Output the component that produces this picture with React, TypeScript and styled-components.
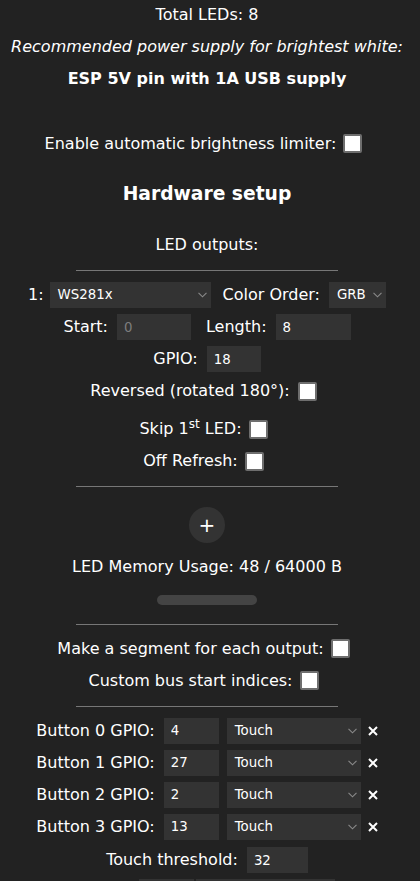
import React from 'react';
import styled, { createGlobalStyle } from 'styled-components';

const Global = createGlobalStyle`
  html, body { margin: 0; padding: 0; background: #222; }
  body {
    font-family: "DejaVu Sans", Verdana, sans-serif;
    color: #fff;
    overflow: hidden;
  }
  #root { height: 881px; overflow: hidden; }
`;

const Page = styled.div`
  width: 414px;
  display: flex;
  flex-direction: column;
  align-items: center;
  font-size: 16px;
`;

const Line = styled.div<{ $mt?: number; $italic?: boolean; $bold?: boolean; $pl?: number }>`
  height: 32px;
  line-height: 32px;
  display: flex;
  align-items: center;
  justify-content: center;
  white-space: nowrap;
  margin-top: ${(p) => p.$mt ?? 0}px;
  padding-left: ${(p) => p.$pl ?? 0}px;
  font-style: ${(p) => (p.$italic ? 'italic' : 'normal')};
  font-weight: ${(p) => (p.$bold ? 'bold' : 'normal')};
`;

const Heading = styled.h3<{ $mt: number }>`
  margin: ${(p) => p.$mt}px 0 0;
  height: 38px;
  line-height: 38px;
  font-size: 18.72px;
  font-weight: bold;
`;

const Rule = styled.div<{ $mt: number }>`
  width: 262px;
  height: 0;
  border-top: 1px solid #777;
  margin-top: ${(p) => p.$mt}px;
`;

const Label = styled.span<{ $ml?: number }>`
  margin-left: ${(p) => p.$ml ?? 0}px;
`;

const Sup = styled.sup`
  font-size: 12px;
  line-height: 0;
  vertical-align: 6px;
`;

const Check = styled.span<{ $ml: number }>`
  display: inline-block;
  box-sizing: border-box;
  width: 19px;
  height: 19px;
  margin-left: ${(p) => p.$ml}px;
  margin-right: 7px;
  background: #fff;
  border: 2px solid #6e6e6e;
  border-radius: 2px;
`;

const Field = styled.input<{ $w: number; $ml: number; $dim?: boolean }>`
  box-sizing: border-box;
  width: ${(p) => p.$w}px;
  height: 26px;
  margin: 0 0 0 ${(p) => p.$ml}px;
  padding: 0 0 0 7px;
  border: none;
  outline: none;
  background: #333;
  color: ${(p) => (p.$dim ? '#7d7d7d' : '#fff')};
  font-family: "DejaVu Sans", Verdana, sans-serif;
  font-size: 13.33px;
`;

const SelectBox = styled.div<{ $w: number; $ml: number }>`
  box-sizing: border-box;
  width: ${(p) => p.$w}px;
  height: 26px;
  margin-left: ${(p) => p.$ml}px;
  padding: 0 4px 0 8px;
  background: #333;
  display: flex;
  align-items: center;
  justify-content: space-between;
  font-size: 13.33px;
  line-height: 26px;
  color: #fff;
`;

const Chevron = () => (
  <svg width="9" height="6" viewBox="0 0 9 6" fill="none">
    <path d="M0.5 0.8 L4.5 4.8 L8.5 0.8" stroke="#8a8a8a" strokeWidth="1.1" />
  </svg>
);

const Select: React.FC<{ w: number; ml: number; text: string }> = ({ w, ml, text }) => (
  <SelectBox $w={w} $ml={ml}>
    <span>{text}</span>
    <Chevron />
  </SelectBox>
);

const CloseMark = styled.span<{ $ml: number }>`
  display: inline-flex;
  margin-left: ${(p) => p.$ml}px;
`;

const Close: React.FC<{ ml: number }> = ({ ml }) => (
  <CloseMark $ml={ml}>
    <svg width="10" height="10" viewBox="0 0 10 10">
      <path d="M1 1 L9 9 M9 1 L1 9" stroke="#fff" strokeWidth="2" />
    </svg>
  </CloseMark>
);

const PlusButton = styled.div<{ $mt: number }>`
  width: 36px;
  height: 36px;
  border-radius: 50%;
  background: #333;
  margin-top: ${(p) => p.$mt}px;
  display: flex;
  align-items: center;
  justify-content: center;
  font-size: 20px;
  line-height: 36px;
`;

const Bar = styled.div<{ $mt: number }>`
  width: 100px;
  height: 10px;
  border-radius: 5px;
  background: #444;
  margin-top: ${(p) => p.$mt}px;
`;

export default function App() {
  const buttons = [
    { n: 0, v: '4' },
    { n: 1, v: '27' },
    { n: 2, v: '2' },
    { n: 3, v: '13' },
  ];
  return (
    <>
      <Global />
      <Page>
        <Line $mt={-1.5}>Total LEDs: 8</Line>
        <Line $italic>Recommended power supply for brightest white:</Line>
        <Line $bold>ESP 5V pin with 1A USB supply</Line>
        <Line $mt={33}>
          Enable automatic brightness limiter:<Check $ml={7} />
        </Line>
        <Heading $mt={15.5}>Hardware setup</Heading>
        <Line $mt={16}>LED outputs:</Line>
        <Rule $mt={8.5} />
        <Line $mt={8.5}>
          <Label>1:</Label>
          <Select w={161} ml={6} text="WS281x" />
          <Label $ml={12}>Color Order:</Label>
          <Select w={57} ml={9} text="GRB" />
        </Line>
        <Line>
          <Label>Start:</Label>
          <Field $w={74} $ml={9} $dim readOnly value="0" />
          <Label $ml={15}>Length:</Label>
          <Field $w={75} $ml={9} readOnly value="8" />
        </Line>
        <Line>
          <Label>GPIO:</Label>
          <Field $w={54} $ml={9} readOnly value="18" />
        </Line>
        <Line>
          Reversed (rotated 180°):<Check $ml={8} />
        </Line>
        <Line $mt={6}>
          <Label>
            Skip 1<Sup>st</Sup> LED:
          </Label>
          <Check $ml={7} />
        </Line>
        <Line>
          Off Refresh:<Check $ml={7} />
        </Line>
        <Rule $mt={8.5} />
        <PlusButton $mt={20}>+</PlusButton>
        <Line $mt={8.5}>LED Memory Usage: 48 / 64000 B</Line>
        <Bar $mt={11.5} />
        <Rule $mt={19} />
        <Line $mt={8}>
          Make a segment for each output:<Check $ml={7} />
        </Line>
        <Line>
          Custom bus start indices:<Check $ml={7} />
        </Line>
        <Rule $mt={9} />
        {buttons.map((b, i) => (
          <Line key={b.n} $mt={i === 0 ? 8 : 0}>
            <Label>Button {b.n} GPIO:</Label>
            <Field $w={55} $ml={9} readOnly value={b.v} />
            <Select w={134} ml={8} text="Touch" />
            <Close ml={7} />
          </Line>
        ))}
        <Line $mt={1.5}>
          <Label>Touch threshold:</Label>
          <Field $w={61} $ml={9} readOnly value="32" />
        </Line>
        <Line $pl={60}>
          <Field $w={55} $ml={0} readOnly value="" />
          <Select w={139} ml={2} text="" />
        </Line>
      </Page>
    </>
  );
}
